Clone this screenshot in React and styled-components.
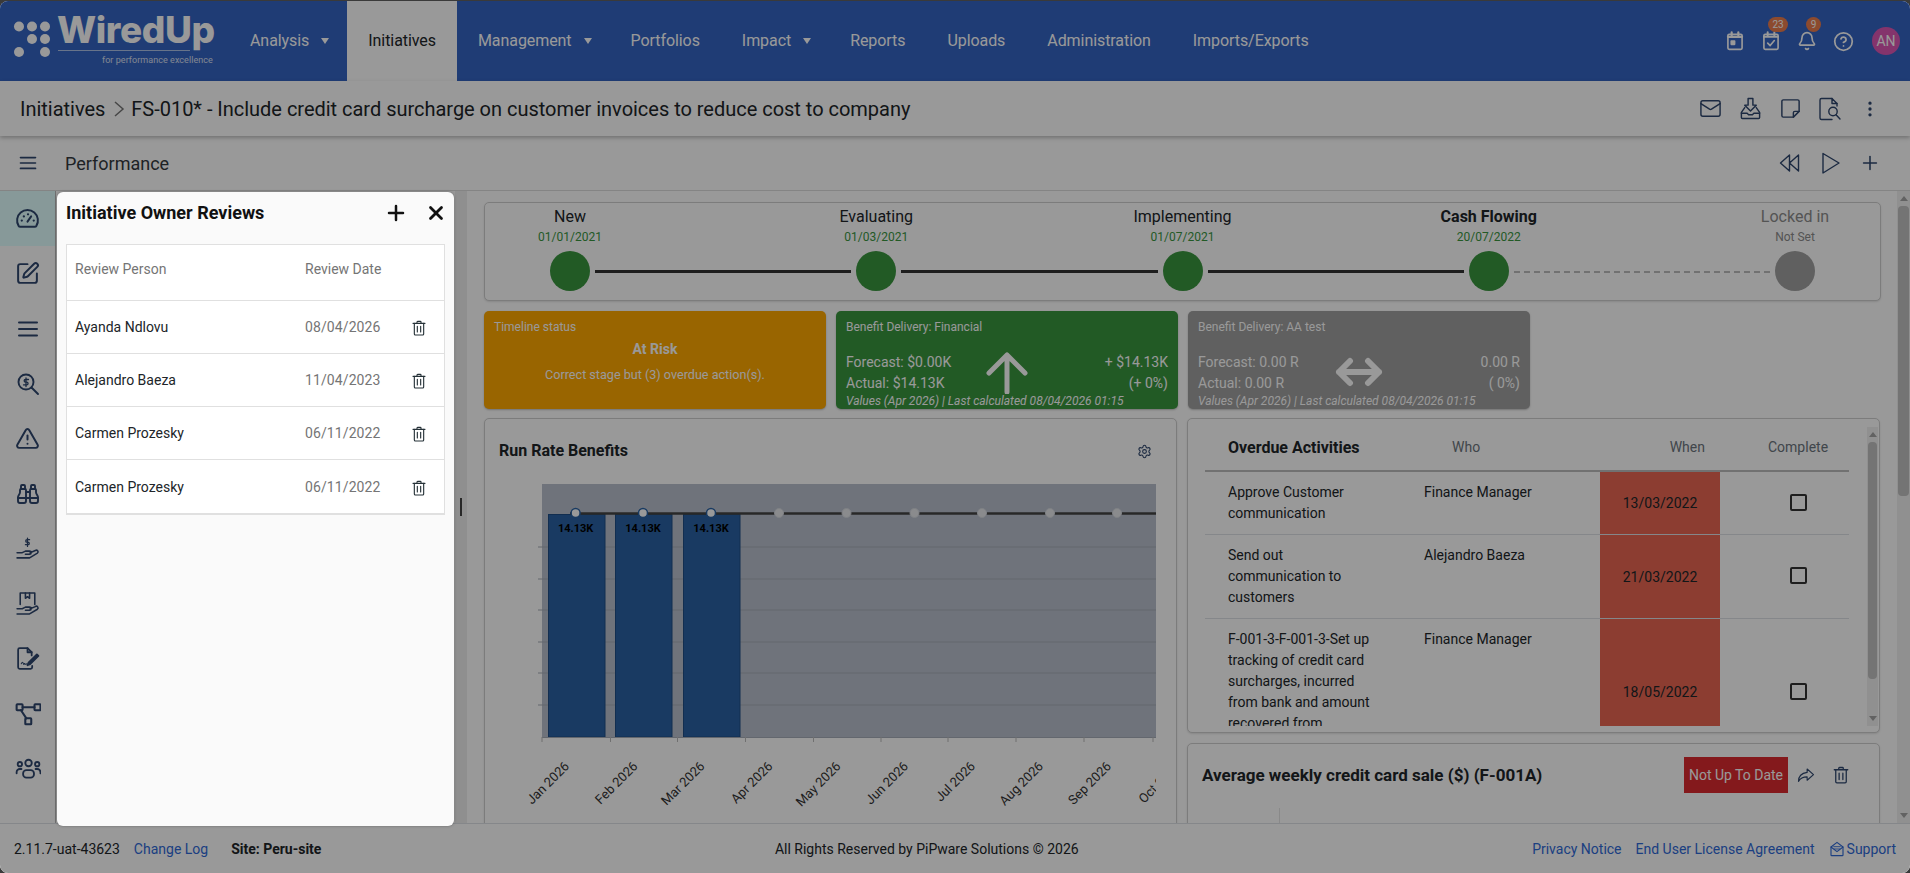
import React from 'react';
import styled, { createGlobalStyle } from 'styled-components';
import { SquarePen, TriangleAlert, Binoculars, Mail, Plus, X, Settings, CircleHelp, Bell, EllipsisVertical } from 'lucide-react';

const ICON = '#2f476e';

const GlobalStyle = createGlobalStyle`
    html, body {
        margin: 0;
        height: 100%;
        overflow: hidden;
        background: #3a3a3a;
    }
    body {
        font-family: Roboto, "Liberation Sans", sans-serif;
        font-size: 14px;
        color: #212529;
    }
    * {
        box-sizing: border-box;
    }
`;

const Page = styled.div`
    position: relative;
    margin-top: 1px;
    height: 872px;
    display: flex;
    flex-direction: column;
    background: #fff;
    border-radius: 8px;
    overflow: hidden;
`;

/* ---------- icons ---------- */

const Glyph = styled.svg.attrs(props => ({
    viewBox: props.$box || '0 0 24 24',
    fill: 'none',
    stroke: 'currentColor',
    strokeWidth: props.$stroke || 1.7,
    strokeLinecap: 'round',
    strokeLinejoin: 'round',
}))`
    width: ${props => props.$size || 24}px;
    height: ${props => props.$size || 24}px;
    display: block;
    flex: none;
`;

const GaugeIcon = () => (
    <Glyph $size={25} $stroke={1.9}>
        <path d="M5 20h14a1.8 1.8 0 0 0 1.5-.9A10 10 0 1 0 3.5 19.100 1.800 1.800 0 0 0 5 20z" />
        <path d="M12 15l3.500-5" />
        <path d="M6.500 14h.01M8.500 10h.01M12.500 8h.01M18 14h.01" strokeWidth="2.200" />
    </Glyph>
);
const LinesIcon = ({ size }) => (
    <Glyph $size={size || 24} $stroke={2}>
        <path d="M3 5.500h18M3 12h18M3 18.500h18" />
    </Glyph>
);
const SearchMoneyIcon = () => (
    <Glyph $size={24} $stroke={1.9}>
        <circle cx="10" cy="10" r="7.500" />
        <path d="M15.500 15.500L22 22" />
        <path d="M12.500 7.500h-3a1.300 1.300 0 0 0 0 2.700h1.200a1.300 1.300 0 0 1 0 2.700H7.500M10 6v8.500" strokeWidth="1.300" />
    </Glyph>
);
const HandMoneyIcon = () => (
    <Glyph $size={25} $stroke={1.500}>
        <path d="M2 16h5l3-1.500h4a1.500 1.500 0 0 1 0 3H10M14.500 16l5-2a1.500 1.500 0 0 1 2 2.500L14 21H2" />
        <path d="M14 3.500h-2.500a1.100 1.100 0 0 0 0 2.400h1a1.100 1.100 0 0 1 0 2.400H10M12 2v8" strokeWidth="1.200" />
    </Glyph>
);
const HandBoxIcon = () => (
    <Glyph $size={25} $stroke={1.500}>
        <path d="M2 17h5l3-1.500h4a1.500 1.500 0 0 1 0 3H10M14.500 17l5-2a1.500 1.500 0 0 1 2 2.500L14 22H2" />
        <path d="M5 13V2h14v11" />
        <path d="M10 2v5l2-1.500L14 7V2" />
    </Glyph>
);
const FileSignIcon = () => (
    <Glyph $size={25} $stroke={1.700}>
        <path d="M16 9V6l-4-4H4.500A1.500 1.500 0 0 0 3 3.500v17A1.500 1.500 0 0 0 4.500 22H15a1.500 1.500 0 0 0 1.500-1.500V19" />
        <path d="M12 2v4h4" />
        <path d="M6 17c1-2 1.500-2 2 0s1-1 1.500 0 1 .500 2 0" strokeWidth="1" />
        <path d="M13 16l8-8 1.500 1.500-8 8-2.500 1z" fill="currentColor" />
    </Glyph>
);
const NodesIcon = () => (
    <Glyph $size={26} $stroke={1.900}>
        <rect x="1.500" y="3" width="5.500" height="5.500" rx=".6" />
        <rect x="18" y="3" width="5.500" height="5.500" rx=".6" />
        <rect x="9.500" y="16" width="5.500" height="5.500" rx=".6" />
        <path d="M7 5.700h11M5.500 8.500l5 7.500" />
    </Glyph>
);
const TeamIcon = () => (
    <Glyph $size={26} $stroke={1.700}>
        <circle cx="12.500" cy="6.500" r="3" />
        <circle cx="4.500" cy="7.500" r="2" />
        <circle cx="20.500" cy="7.500" r="2" />
        <rect x="7.500" y="13" width="10" height="7" rx="3" />
        <path d="M1.500 16v-1a3 3 0 0 1 3-3h1.500M23.500 16v-1a3 3 0 0 0-3-3H19" />
    </Glyph>
);
const TrashIcon = ({ size }) => (
    <Glyph $size={size || 16} $stroke={1.700}>
        <path d="M3 5h18M9 5V3a1 1 0 0 1 1-1h4a1 1 0 0 1 1 1v2" />
        <path d="M5 5v16a1.500 1.500 0 0 0 1.500 1.500h11A1.500 1.500 0 0 0 19 21V5" />
        <path d="M9.500 9.500v8.500M14.500 9.500v8.500" />
    </Glyph>
);
const CalendarIcon = () => (
    <Glyph $size={20} $stroke={2}>
        <rect x="3.500" y="4" width="17" height="18" rx="1.500" />
        <path d="M8 1.500V5M16 1.500V5M3.500 7h17" strokeWidth="2.600" />
        <rect x="7.500" y="12" width="4" height="4" fill="currentColor" />
    </Glyph>
);
const TaskIcon = () => (
    <Glyph $size={20} $stroke={2}>
        <rect x="3.500" y="4" width="17" height="18" rx="1.500" />
        <path d="M8 1.500V5M16 1.500V5M3.500 7h17" strokeWidth="2.400" />
        <path d="M8 14.500l3 3 5-6" />
    </Glyph>
);
const InboxIcon = () => (
    <Glyph $size={23} $stroke={1.500}>
        <path d="M9.500 1.500h5v7h3.500l-6 6-6-6h3.500z" />
        <path d="M6 11l-3.500 5v5.500a1 1 0 0 0 1 1h17a1 1 0 0 0 1-1V16L18 11" />
        <path d="M2.500 17h6l1.500 1.500h4l1.500-1.500h6" />
    </Glyph>
);
const NoteIcon = () => (
    <Glyph $size={23} $stroke={1.500}>
        <path d="M3 4.500A1.500 1.500 0 0 1 4.500 3h15A1.500 1.500 0 0 1 21 4.500V15l-6 6H4.500A1.500 1.500 0 0 1 3 19.500z" />
        <path d="M21 15h-4.500a1.500 1.500 0 0 0-1.500 1.500V21" />
    </Glyph>
);
const FileSearchIcon = () => (
    <Glyph $size={24} $stroke={1.400}>
        <path d="M14 1.500H3.500A1.500 1.500 0 0 0 2 3v18a1.500 1.500 0 0 0 1.500 1.500H14" />
        <path d="M14 1.500v5h5l-5-5" />
        <circle cx="15" cy="14.500" r="4.200" />
        <path d="M18 17.700l4 4.300M19 6.500V9" />
    </Glyph>
);
const RewindIcon = () => (
    <Glyph $size={24} $stroke={1.400}>
        <path d="M11.500 4L2.500 12l9 8zM20.500 4l-9 8 9 8z" />
    </Glyph>
);
const PlayIcon = () => (
    <Glyph $size={24} $stroke={1.400}>
        <path d="M5 2.500L21 12 5 22z" />
    </Glyph>
);
const ShareIcon = () => (
    <Glyph $size={18} $stroke={1.500}>
        <path d="M13.500 4l8.500 7.500-8.500 7.500v-4.500c-5 0-9 1.500-11.500 6 0-6.500 4-11 11.500-12z" />
    </Glyph>
);
const SupportIcon = () => (
    <Glyph $size={16} $stroke={1.700}>
        <path d="M3 9v12a1 1 0 0 0 1 1h16a1 1 0 0 0 1-1V9L12 2z" />
        <path d="M3 9l9 7 9-7" />
        <path d="M7 8.500h10M8 12h8" strokeWidth="1.300" />
    </Glyph>
);
const UpArrowIcon = () => (
    <Glyph $size={44} $stroke={5} $box="0 0 44 44">
        <path d="M22 42V5M4 23L22 5l18 18" />
    </Glyph>
);
const SideArrowIcon = () => (
    <Glyph $size={48} $stroke={6} $box="0 0 48 48">
        <path d="M4 24h40M15 13L4 24l11 11M33 13l11 11-11 11" />
    </Glyph>
);

/* ---------- top bar ---------- */

const TopBar = styled.header`
    height: 80px;
    flex: none;
    display: flex;
    background: #3464c3;
    color: #fff;
`;

const LogoBox = styled.div`
    position: relative;
    width: 229px;
    flex: none;
`;

const LogoDots = styled.svg`
    position: absolute;
    left: 13px;
    top: 19px;
`;

const LogoWord = styled.div`
    position: absolute;
    left: 57px;
    top: 7px;
    font-family: Inter, Roboto, sans-serif;
    font-weight: 800;
    font-size: 37px;
    line-height: 44px;
    letter-spacing: -0.4px;
`;

const LogoRule = styled.div`
    position: absolute;
    left: 58px;
    top: 49px;
    width: 132px;
    height: 1px;
    background: rgba(255, 255, 255, 0.6);
`;

const LogoTag = styled.div`
    position: absolute;
    left: 102px;
    top: 53px;
    font-size: 9px;
    line-height: 13px;
    letter-spacing: 0.05px;
    white-space: nowrap;
    opacity: 0.8;
`;

const NavItem = styled.div`
    display: flex;
    align-items: center;
    padding: 0 ${props => (props.$menu ? 18 : 21)}px 1px 21px;
    font-size: 16px;
    letter-spacing: -0.07px;
    color: ${props => (props.$active ? '#212529' : '#fff')};
    background: ${props => (props.$active ? '#fff' : 'transparent')};
    white-space: nowrap;
`;

const Caret = styled.span`
    width: 0;
    height: 0;
    margin-left: 12px;
    border-left: 4px solid transparent;
    border-right: 4px solid transparent;
    border-top: 6px solid currentColor;
`;

const TopIcons = styled.div`
    margin-left: auto;
    padding-right: 10px;
    display: flex;
    align-items: center;
`;

const TopIcon = styled.div`
    position: relative;
    width: 36px;
    display: flex;
    justify-content: center;
`;

const Badge = styled.span`
    position: absolute;
    top: -14px;
    left: ${props => props.$left}px;
    min-width: ${props => props.$w}px;
    height: 15px;
    padding: 0 3px;
    border-radius: 8px;
    background: #ea7c4e;
    color: #fff;
    font-size: 10px;
    line-height: 15px;
    text-align: center;
`;

const Avatar = styled.div`
    width: 28px;
    height: 28px;
    margin-left: 11px;
    border-radius: 50%;
    background: #dc57b4;
    font-size: 14px;
    line-height: 28px;
    text-align: center;
`;

/* ---------- title bars ---------- */

const CrumbBar = styled.div`
    height: 55px;
    flex: none;
    display: flex;
    align-items: center;
    padding: 0 20px;
    font-size: 20px;
    letter-spacing: -0.02px;
    box-shadow: 0 2px 4px rgba(0, 0, 0, 0.25);
    position: relative;
    z-index: 1;
`;

const CrumbChevron = styled.svg`
    margin: 0 5px 0 7px;
    color: #777;
`;

const IconTray = styled.div`
    margin-left: auto;
    display: flex;
    align-items: center;
    color: ${ICON};
`;

const TrayButton = styled.div`
    width: 40px;
    display: flex;
    justify-content: center;
`;

const ToolBar = styled.div`
    height: 55px;
    flex: none;
    display: flex;
    align-items: center;
    padding: 0 20px 0 18px;
    border-bottom: 1px solid #ddd;
    color: ${ICON};
`;

const ToolTitle = styled.div`
    margin-left: 27px;
    font-size: 18px;
    color: #343a40;
`;

/* ---------- body ---------- */

const Body = styled.div`
    flex: 1;
    min-height: 0;
    display: flex;
    overflow: hidden;
`;

const SideRail = styled.nav`
    width: 56px;
    flex: none;
    background: #fff;
    border-right: 1px solid #bbb;
    color: ${ICON};
`;

const RailItem = styled.div`
    height: 55px;
    display: flex;
    align-items: center;
    justify-content: center;
    background: ${props => (props.$active ? '#e1ffff' : 'transparent')};
`;

const LeftPane = styled.div`
    width: 399px;
    flex: none;
`;

const Splitter = styled.div`
    width: 12px;
    flex: none;
    display: flex;
    align-items: center;
    justify-content: center;
    background: #efefef;
`;

const SplitHandle = styled.span`
    width: 2px;
    height: 18px;
    margin-top: -1px;
    background: #444;
`;

const Main = styled.main`
    flex: 1;
    min-width: 0;
    display: flex;
`;

const MainColumn = styled.div`
    flex: 1;
    min-width: 0;
    padding: 11px 16px 0 17px;
`;

const ScrollTrack = styled.div`
    width: ${props => props.$w}px;
    flex: none;
    display: flex;
    flex-direction: column;
    background: #f1f1f1;
`;

const ScrollArrow = styled.div`
    height: 15px;
    flex: none;
    display: flex;
    align-items: center;
    justify-content: center;
    margin-top: ${props => (props.$end ? 'auto' : 0)};
    &::after {
        content: '';
        border-left: 4px solid transparent;
        border-right: 4px solid transparent;
        ${props => (props.$end ? 'border-top' : 'border-bottom')}: 5px solid #a3a3a3;
    }
`;

const ScrollThumb = styled.div`
    height: ${props => props.$h}px;
    flex: none;
    margin: 0 1px;
    border-radius: 4px;
    background: #c1c1c1;
`;

const Panel = styled.section`
    border: 1px solid #cfcfcf;
    border-radius: 5px;
    background: #fff;
    box-shadow: 0 1px 2px rgba(0, 0, 0, 0.12);
`;

const Timeline = styled(Panel)`
    height: 99px;
    padding: 0 65px 9px;
    display: flex;
    align-items: flex-end;
`;

const Stage = styled.div`
    width: 40px;
    flex: none;
    display: flex;
    flex-direction: column;
    align-items: center;
    white-space: nowrap;
`;

const StageName = styled.div`
    margin-bottom: -2px;
    font-size: 16px;
    line-height: 24px;
    font-weight: ${props => (props.$current ? 700 : 400)};
    color: ${props => (props.$off ? '#8c8c8c' : '#212529')};
`;

const StageDate = styled.div`
    font-size: 12px;
    line-height: 20px;
    margin-bottom: 4px;
    color: ${props => (props.$off ? '#8c8c8c' : '#3a963f')};
`;

const StageDot = styled.div`
    width: 40px;
    height: 40px;
    border-radius: 50%;
    background: ${props => (props.$off ? '#a0a0a0' : '#3a963f')};
`;

const Connector = styled.div`
    flex: 1;
    margin: 0 5px 18px;
    height: 0;
    border-top: ${props => (props.$off ? '2px dashed #bdbdbd' : '3px solid #333')};
`;

const CardRow = styled.div`
    display: flex;
    gap: 10px;
    margin-top: 10px;
`;

const StatusCard = styled.div`
    width: 342px;
    height: 98px;
    flex: none;
    padding: 8px 10px 0;
    border-radius: 5px;
    background: ${props => props.$bg};
    color: #fff;
    box-shadow: 0 1px 2px rgba(0, 0, 0, 0.25);
    overflow: hidden;
`;

const CardTitle = styled.div`
    font-size: 12px;
    line-height: 16px;
`;

const CardHeadline = styled.div`
    margin-top: 4px;
    font-size: 14px;
    font-weight: 700;
    line-height: 20px;
    text-align: center;
`;

const CardNote = styled.div`
    margin-top: 6px;
    font-size: 12.6px;
    line-height: 20px;
    text-align: center;
`;

const Figures = styled.div`
    margin-top: 16px;
    display: grid;
    grid-template-columns: 1fr auto 1fr;
    grid-auto-rows: 21px;
    align-items: center;
    font-size: 14px;
`;

const FigureArrow = styled.div`
    grid-column: 2;
    grid-row: 1 / span 2;
    width: 48px;
    height: 42px;
    display: flex;
    align-items: center;
    justify-content: center;
`;

const FigureRight = styled.div`
    grid-column: 3;
    text-align: right;
`;

const CardFoot = styled.div`
    font-size: 12px;
    line-height: 16px;
    font-style: italic;
    white-space: nowrap;
`;

const Columns = styled.div`
    display: grid;
    grid-template-columns: 693px 693px;
    gap: 10px;
    margin-top: 9px;
`;

const Stack = styled.div`
    display: flex;
    flex-direction: column;
    gap: 10px;
`;

const RunRate = styled(Panel)`
    height: 420px;
    padding: 0 0 0 35px;
    position: relative;
`;

const RunHead = styled.div`
    height: 65px;
    display: flex;
    align-items: center;
    justify-content: space-between;
    margin-left: -21px;
    padding-right: 24px;
    padding-bottom: 1px;
    color: ${ICON};
`;

const PanelTitle = styled.h3`
    margin: 0;
    font-size: 16px;
    font-weight: 700;
    line-height: 20px;
    color: #212529;
`;

const ChartSvg = styled.svg`
    display: block;
`;

/* ---------- overdue table ---------- */

const Overdue = styled(Panel)`
    height: 315px;
    padding: 8px 1px 6px 17px;
    display: flex;
`;

const OverdueClip = styled.div`
    flex: 1;
    min-width: 0;
    overflow: hidden;
    margin-right: 18px;
`;

const OverdueRow = styled.div`
    display: grid;
    grid-template-columns: 214px 181px 120px 129px;
    border-bottom: ${props => (props.$head ? '2px solid #bdbdbd' : '1px solid #dee2e6')};
`;

const HeadCell = styled.div`
    height: 43px;
    padding: 0 ${props => props.$right || 0}px 4px ${props => props.$left || 0}px;
    display: flex;
    align-items: center;
    justify-content: ${props => props.$justify || 'flex-start'};
    color: #6c757d;
`;

const OverdueTitle = styled(PanelTitle)`
    margin-top: 2px;
`;

const TextCell = styled.div`
    padding: 10px ${props => props.$right || 0}px 10px ${props => props.$left || 0}px;
    line-height: 21px;
`;

const WhenCell = styled.div`
    display: flex;
    align-items: center;
    justify-content: center;
    background: #e96753;
`;

const CheckCell = styled.div`
    display: flex;
    align-items: center;
    justify-content: center;
    padding: 0 0 2px 27px;
`;

const CheckBox = styled.span`
    width: 17px;
    height: 17px;
    border: 2px solid #333;
    border-radius: 2px;
`;

const MeasureCard = styled(Panel)`
    height: 200px;
    padding: 13px 29px 0 14px;
`;

const MeasureHead = styled.div`
    display: flex;
    align-items: center;
    color: ${ICON};
`;

const MeasureTitle = styled(PanelTitle)`
    font-size: 17px;
    margin-right: auto;
`;

const StateButton = styled.div`
    width: 104px;
    height: 36px;
    line-height: 36px;
    text-align: center;
    background: #dd2b30;
    color: #fff;
    margin-right: 9px;
`;

const MeasureAction = styled.div`
    margin-left: ${props => props.$gap || 0}px;
`;

const ChartStub = styled.div`
    width: 1px;
    height: 20px;
    margin: 15px 0 0 77px;
    background: #e4e4e4;
`;

/* ---------- footer ---------- */

const Footer = styled.footer`
    height: 50px;
    flex: none;
    display: flex;
    align-items: center;
    justify-content: space-between;
    padding: 0 14px;
    border-top: 1px solid #dee2e6;
    background: #fff;
`;

const FootGroup = styled.div`
    display: flex;
    align-items: center;
    gap: ${props => props.$gap}px;
`;

const FootLink = styled.a`
    color: #2f6ad8;
    text-decoration: none;
    display: flex;
    align-items: center;
    gap: 2px;
`;

const SiteName = styled.strong`
    margin-left: 9px;
`;

/* ---------- modal ---------- */

const Backdrop = styled.div`
    position: absolute;
    inset: 0;
    z-index: 5;
    background: rgba(0, 0, 0, 0.4);
`;

const Drawer = styled.aside`
    position: absolute;
    left: 57px;
    top: 191px;
    width: 397px;
    height: 634px;
    padding: 0 9px;
    background: #fafafa;
    border-radius: 6px;
    box-shadow: 0 0 3px rgba(0, 0, 0, 0.3);
`;

const DrawerHead = styled.div`
    height: 52px;
    margin-right: -2px;
    padding: 0 0 11px 0;
    display: flex;
    align-items: center;
    gap: 17px;
    color: #111;
`;

const DrawerTitle = styled.h2`
    margin: 0 auto 0 0;
    font-size: 18px;
    line-height: 24px;
    font-weight: 700;
`;

const DrawerTable = styled.div`
    border: 1px solid #e0e0e0;
    border-bottom-width: 2px;
    background: #fff;
`;

const DrawerRow = styled.div`
    height: ${props => (props.$head ? 56 : 53)}px;
    padding: 0 0 ${props => (props.$head ? 8 : 0)}px 8px;
    display: grid;
    grid-template-columns: 230px 99px 1fr;
    align-items: center;
    border-bottom: ${props => (props.$last ? 'none' : '1px solid #e0e0e0')};
    color: ${props => (props.$head ? '#757575' : '#212529')};
`;

const DrawerDate = styled.div`
    color: #757575;
    letter-spacing: 0.1px;
`;

const DrawerTrash = styled.div`
    padding: 2px 0 0 7px;
    color: #263238;
`;

/* ---------- data ---------- */

const navItems = [
    { label: 'Analysis', menu: true },
    { label: 'Initiatives', active: true },
    { label: 'Management', menu: true },
    { label: 'Portfolios' },
    { label: 'Impact', menu: true },
    { label: 'Reports' },
    { label: 'Uploads' },
    { label: 'Administration' },
    { label: 'Imports/Exports' },
];

const stages = [
    { name: 'New', date: '01/01/2021' },
    { name: 'Evaluating', date: '01/03/2021' },
    { name: 'Implementing', date: '01/07/2021' },
    { name: 'Cash Flowing', date: '20/07/2022', current: true },
    { name: 'Locked in', date: 'Not Set', off: true },
];

const reviews = [
    ['Ayanda Ndlovu', '08/04/2026'],
    ['Alejandro Baeza', '11/04/2023'],
    ['Carmen Prozesky', '06/11/2022'],
    ['Carmen Prozesky', '06/11/2022'],
];

const activities = [
    ['Approve Customer communication', 'Finance Manager', '13/03/2022'],
    ['Send out communication to customers', 'Alejandro Baeza', '21/03/2022'],
    ['F-001-3-F-001-3-Set up tracking of credit card surcharges, incurred from bank and amount recovered from customers', 'Finance Manager', '18/05/2022'],
];

const railIcons = [
    <GaugeIcon />,
    <SquarePen size={25} strokeWidth={1.9} />,
    <LinesIcon />,
    <SearchMoneyIcon />,
    <TriangleAlert size={25} strokeWidth={1.9} />,
    <Binoculars size={24} strokeWidth={1.9} />,
    <HandMoneyIcon />,
    <HandBoxIcon />,
    <FileSignIcon />,
    <NodesIcon />,
    <TeamIcon />,
];

const months = ['Jan', 'Feb', 'Mar', 'Apr', 'May', 'Jun', 'Jul', 'Aug', 'Sep', 'Oct'];
const ticks = [22, 90.500, 157.500, 225.500, 293.500, 361, 428, 496, 564, 633];
const points = [55.600, 123, 191, 259, 326.500, 394.500, 462, 530, 597];
const bars = [28, 95, 163];
const grid = [63, 95, 126, 158, 189, 221];

function RunRateChart() {
    return (
        <ChartSvg width="636" height="340" viewBox="0 0 636 340">
            <rect x="22" y="0" width="614" height="253" fill="#b9c0cd" />
            {grid.map(y => (
                <line key={y} x1="18" x2="636" y1={y} y2={y} stroke="#a5acb7" />
            ))}
            {bars.map(x => (
                <rect key={x} x={x + 0.5} y="30.500" width="56.500" height="222.500" fill="#2a62a3" stroke="#1f4d85" />
            ))}
            <line x1="22" x2="636" y1="253.500" y2="253.500" stroke="#a5acb7" />
            {ticks.map(x => (
                <line key={x} x1={x} x2={x} y1="253" y2="258" stroke="#bbb" />
            ))}
            <line x1="50" x2="636" y1="29.500" y2="29.500" stroke="#444" strokeWidth="2.500" />
            {points.map((x, i) => (
                <circle key={x} cx={x} cy="29" r="4.500" fill={i < 3 ? '#fff' : '#e6e8ec'} stroke={i < 3 ? '#2a62a3' : '#d4d8de'} strokeWidth={i < 3 ? 1.500 : 1} />
            ))}
            {bars.map((x, i) => (
                <text key={x} x={points[i]} y="48" textAnchor="middle" fontSize="11" fontWeight="700" fill="#000" fontFamily="Roboto, sans-serif">14.13K</text>
            ))}
            {months.map((m, i) => (
                <text
                    key={m}
                    x={ticks[i] + 28}
                    y="283"
                    textAnchor="end"
                    fontSize="13"
                    fill="#333"
                    fontFamily="Roboto, sans-serif"
                    transform={`rotate(-45 ${ticks[i] + 28} 283)`}
                >
                    {m} 2026
                </text>
            ))}
        </ChartSvg>
    );
}

function BenefitCard({ bg, title, forecast, actual, delta, pct, arrow }) {
    return (
        <StatusCard $bg={bg}>
            <CardTitle>{title}</CardTitle>
            <Figures>
                <div>{forecast}</div>
                <FigureArrow>{arrow}</FigureArrow>
                <FigureRight>{delta}</FigureRight>
                <div>{actual}</div>
                <FigureRight>{pct}</FigureRight>
            </Figures>
            <CardFoot>Values (Apr 2026) | Last calculated 08/04/2026 01:15</CardFoot>
        </StatusCard>
    );
}

export default function App() {
    return (
        <Page>
            <GlobalStyle />
            <TopBar>
                <LogoBox>
                    <LogoDots width="40" height="40" viewBox="0 0 40 40" fill="#fff">
                        <circle cx="6" cy="6.500" r="5" />
                        <circle cx="19" cy="6.500" r="5" />
                        <circle cx="32" cy="6.500" r="5" />
                        <circle cx="19" cy="19" r="5" />
                        <circle cx="32" cy="19" r="5" />
                        <circle cx="6" cy="32" r="5" />
                        <circle cx="32" cy="32" r="5" />
                    </LogoDots>
                    <LogoWord>WiredUp</LogoWord>
                    <LogoRule />
                    <LogoTag>for performance excellence</LogoTag>
                </LogoBox>
                {navItems.map(item => (
                    <NavItem key={item.label} $menu={item.menu} $active={item.active}>
                        {item.label}
                        {item.menu && <Caret />}
                    </NavItem>
                ))}
                <TopIcons>
                    <TopIcon><CalendarIcon /></TopIcon>
                    <TopIcon>
                        <TaskIcon />
                        <Badge $left={15} $w={20}>23</Badge>
                    </TopIcon>
                    <TopIcon>
                        <Bell size={20} strokeWidth={2} />
                        <Badge $left={17} $w={15}>9</Badge>
                    </TopIcon>
                    <TopIcon><CircleHelp size={21} strokeWidth={2} /></TopIcon>
                    <Avatar>AN</Avatar>
                </TopIcons>
            </TopBar>

            <CrumbBar>
                Initiatives
                <CrumbChevron width="14" height="20" viewBox="0 0 14 20" fill="none" stroke="currentColor" strokeWidth="1.500">
                    <path d="M3 3l8 7-8 7" />
                </CrumbChevron>
                FS-010* - Include credit card surcharge on customer invoices to reduce cost to company
                <IconTray>
                    <TrayButton><Mail size={23} strokeWidth={1.500} /></TrayButton>
                    <TrayButton><InboxIcon /></TrayButton>
                    <TrayButton><NoteIcon /></TrayButton>
                    <TrayButton><FileSearchIcon /></TrayButton>
                    <TrayButton><EllipsisVertical size={20} strokeWidth={2} /></TrayButton>
                </IconTray>
            </CrumbBar>

            <ToolBar>
                <LinesIcon size={20} />
                <ToolTitle>Performance</ToolTitle>
                <IconTray>
                    <TrayButton><RewindIcon /></TrayButton>
                    <TrayButton><PlayIcon /></TrayButton>
                    <TrayButton><Plus size={22} strokeWidth={1.700} /></TrayButton>
                </IconTray>
            </ToolBar>

            <Body>
                <SideRail>
                    {railIcons.map((icon, i) => (
                        <RailItem key={i} $active={i === 0}>{icon}</RailItem>
                    ))}
                </SideRail>
                <LeftPane />
                <Splitter><SplitHandle /></Splitter>
                <Main>
                    <MainColumn>
                        <Timeline>
                            {stages.map((stage, i) => (
                                <React.Fragment key={stage.name}>
                                    {i > 0 && <Connector $off={stage.off} />}
                                    <Stage>
                                        <StageName $current={stage.current} $off={stage.off}>{stage.name}</StageName>
                                        <StageDate $off={stage.off}>{stage.date}</StageDate>
                                        <StageDot $off={stage.off} />
                                    </Stage>
                                </React.Fragment>
                            ))}
                        </Timeline>

                        <CardRow>
                            <StatusCard $bg="#ffa800">
                                <CardTitle>Timeline status</CardTitle>
                                <CardHeadline>At Risk</CardHeadline>
                                <CardNote>Correct stage but (3) overdue action(s).</CardNote>
                            </StatusCard>
                            <BenefitCard
                                bg="#3a963f"
                                title="Benefit Delivery: Financial"
                                forecast="Forecast: $0.00K"
                                actual="Actual: $14.13K"
                                delta="+ $14.13K"
                                pct="(+ 0%)"
                                arrow={<UpArrowIcon />}
                            />
                            <BenefitCard
                                bg="#a0a0a0"
                                title="Benefit Delivery: AA test"
                                forecast="Forecast: 0.00 R"
                                actual="Actual: 0.00 R"
                                delta="0.00 R"
                                pct="( 0%)"
                                arrow={<SideArrowIcon />}
                            />
                        </CardRow>

                        <Columns>
                            <RunRate>
                                <RunHead>
                                    <PanelTitle>Run Rate Benefits</PanelTitle>
                                    <Settings size={15} strokeWidth={1.700} />
                                </RunHead>
                                <RunRateChart />
                            </RunRate>

                            <Stack>
                                <Overdue>
                                    <OverdueClip>
                                        <OverdueRow $head>
                                            <HeadCell $left={23}><OverdueTitle>Overdue Activities</OverdueTitle></HeadCell>
                                            <HeadCell $left={33}>Who</HeadCell>
                                            <HeadCell $justify="flex-end" $right={15}>When</HeadCell>
                                            <HeadCell $left={48}>Complete</HeadCell>
                                        </OverdueRow>
                                        {activities.map(row => (
                                            <OverdueRow key={row[2]}>
                                                <TextCell $left={23} $right={41}>{row[0]}</TextCell>
                                                <TextCell $left={5}>{row[1]}</TextCell>
                                                <WhenCell>{row[2]}</WhenCell>
                                                <CheckCell><CheckBox /></CheckCell>
                                            </OverdueRow>
                                        ))}
                                    </OverdueClip>
                                    <ScrollTrack $w={11}>
                                        <ScrollArrow />
                                        <ScrollThumb $h={237} />
                                        <ScrollArrow $end />
                                    </ScrollTrack>
                                </Overdue>
                                <MeasureCard>
                                    <MeasureHead>
                                        <MeasureTitle>Average weekly credit card sale ($) (F-001A)</MeasureTitle>
                                        <StateButton>Not Up To Date</StateButton>
                                        <ShareIcon />
                                        <MeasureAction $gap={17}><TrashIcon size={18} /></MeasureAction>
                                    </MeasureHead>
                                    <ChartStub />
                                </MeasureCard>
                            </Stack>
                        </Columns>
                    </MainColumn>
                    <ScrollTrack $w={13}>
                        <ScrollArrow />
                        <ScrollThumb $h={290} />
                        <ScrollArrow $end />
                    </ScrollTrack>
                </Main>
            </Body>

            <Footer>
                <FootGroup $gap={14}>
                    <span>2.11.7-uat-43623</span>
                    <FootLink>Change Log</FootLink>
                    <SiteName>Site: Peru-site</SiteName>
                </FootGroup>
                <span>All Rights Reserved by PiPware Solutions © 2026</span>
                <FootGroup $gap={14}>
                    <FootLink>Privacy Notice</FootLink>
                    <FootLink>End User License Agreement</FootLink>
                    <FootLink><SupportIcon />Support</FootLink>
                </FootGroup>
            </Footer>

            <Backdrop>
                <Drawer>
                    <DrawerHead>
                        <DrawerTitle>Initiative Owner Reviews</DrawerTitle>
                        <Plus size={24} strokeWidth={2.500} />
                        <X size={22} strokeWidth={3} />
                    </DrawerHead>
                    <DrawerTable>
                        <DrawerRow $head>
                            <div>Review Person</div>
                            <div>Review Date</div>
                        </DrawerRow>
                        {reviews.map((row, i) => (
                            <DrawerRow key={i} $last={i === reviews.length - 1}>
                                <div>{row[0]}</div>
                                <DrawerDate>{row[1]}</DrawerDate>
                                <DrawerTrash><TrashIcon /></DrawerTrash>
                            </DrawerRow>
                        ))}
                    </DrawerTable>
                </Drawer>
            </Backdrop>
        </Page>
    );
}
